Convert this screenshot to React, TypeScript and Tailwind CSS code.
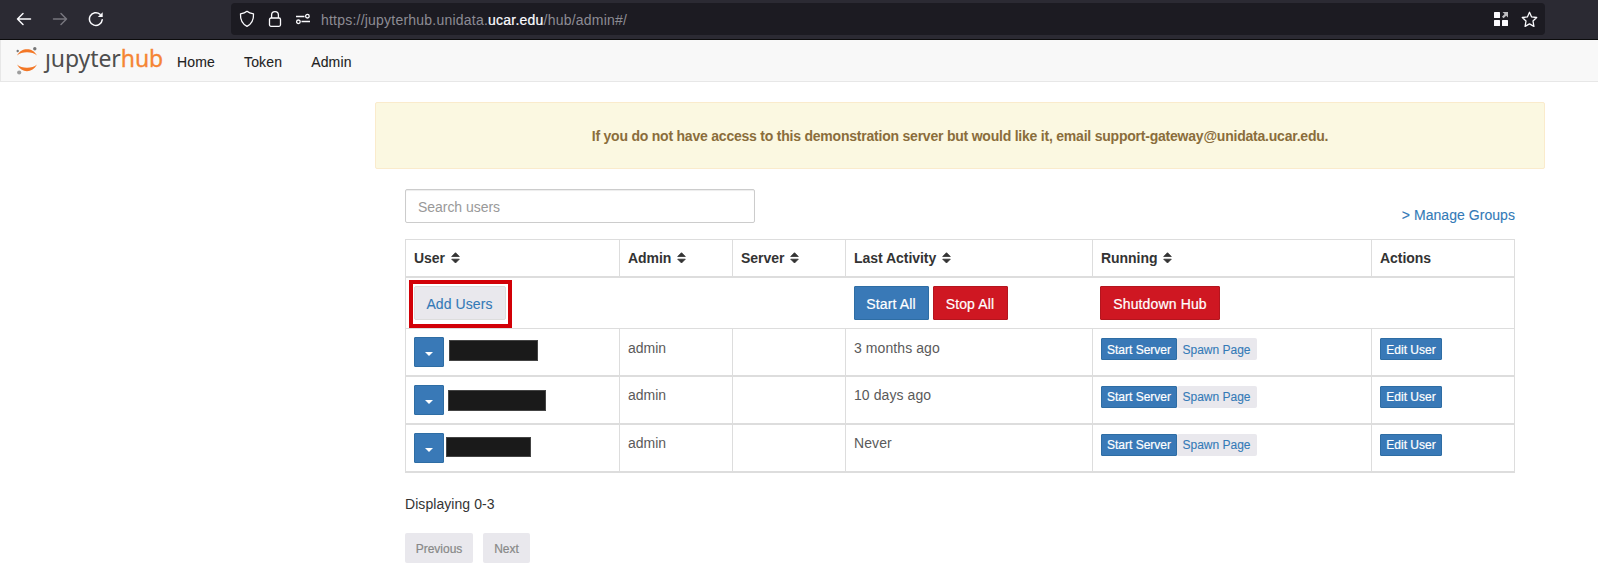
import React from "react";

const users = [
  { activity: "3 months ago", mask: "ml-[5px] mt-[3px] h-[21px] w-[89px]", shift: "pt-px" },
  { activity: "10 days ago", mask: "ml-[4px] mt-[5px] h-[21px] w-[98px]", shift: "" },
  { activity: "Never", mask: "ml-[2px] mt-[4px] h-[20px] w-[85px]", shift: "" },
];

const Sort = () => (
  <svg width="9" height="12" viewBox="0 0 9 12" className="ml-[6px] inline-block align-[-1px]" fill="#333" stroke="#333" strokeWidth="0.8" strokeLinejoin="round">
    <path d="M4.5 0.7 8.3 4.5H0.7Z M0.7 7.2H8.3L4.5 11Z" />
  </svg>
);

function BrowserBar() {
  return (
    <div className="flex h-10 items-start border-b border-[#0c0c0d] bg-[#2b2a33] text-[#fbfbfe]">
      <div className="flex h-[38px] w-[231px] items-center pl-[16px]">
        <svg width="16" height="14" viewBox="0 0 16 14" fill="none" stroke="#fbfbfe" strokeWidth="1.5" strokeLinecap="round" strokeLinejoin="round">
          <path d="M14.5 7H1.5M7 1.5 1.5 7 7 12.5" />
        </svg>
        <svg width="16" height="14" viewBox="0 0 16 14" className="ml-[20px]" fill="none" stroke="#77767e" strokeWidth="1.5" strokeLinecap="round" strokeLinejoin="round">
          <path d="M1.5 7h13M9 1.5 14.5 7 9 12.5" />
        </svg>
        <svg width="16" height="16" viewBox="0 0 16 16" className="ml-[20px]" fill="none" stroke="#fbfbfe" strokeWidth="1.5" strokeLinecap="round">
          <path d="M14.2 8.800A6.400 6.400 0 1 1 12 3.200" />
          <path d="M14.700 1.200v4.900H9.800Z" fill="#fbfbfe" stroke="none" />
        </svg>
      </div>
      <div className="mt-[3px] flex h-8 w-[1314px] items-center rounded-[4px] bg-[#1c1b22] pl-[8px] pr-[7px]">
        <svg width="16" height="18" viewBox="0 0 16 18" fill="none" stroke="#fbfbfe" strokeWidth="1.300" strokeLinejoin="round">
          <path d="M8 1.300C6.200 2.800 4 3.500 1.500 3.900 1.200 9.600 3 13.800 8 16.400 13 13.800 14.800 9.600 14.500 3.900 12 3.500 9.800 2.800 8 1.300Z" />
        </svg>
        <svg width="14" height="18" viewBox="0 0 14 18" className="ml-[13px]" fill="none" stroke="#fbfbfe" strokeWidth="1.300">
          <rect x="1.500" y="8" width="11" height="8.300" rx="1.500" />
          <path d="M3.600 8V5a3.400 3.400 0 0 1 6.800 0v3" />
        </svg>
        <svg width="16" height="12" viewBox="0 0 16 12" className="ml-[13px]" fill="none" stroke="#fbfbfe" strokeWidth="1.300">
          <path d="M1 3.500h8.500M6.500 8.500H15" />
          <circle cx="12.400" cy="3.200" r="1.800" />
          <circle cx="3.400" cy="8.800" r="1.800" />
        </svg>
        <div className="ml-[10px] flex-1 whitespace-nowrap pt-[2px] text-[14px] leading-5 tracking-[0.22px] text-[#8d8c94]">
          https://jupyterhub.unidata.<span className="text-[#fbfbfe] [-webkit-text-stroke:0.2px]">ucar.edu</span>/hub/admin#/
        </div>
        <svg width="14" height="14" viewBox="0 0 14 14" fill="#fbfbfe">
          <rect width="6" height="6" rx=".5" />
          <rect y="8" width="6" height="6" rx=".5" />
          <rect x="8" y="8" width="6" height="6" rx=".5" />
          <path d="M8.500 0H14v5.500L12.200 3.800 9.500 6.200 8 4.700l2.600-2.600Z" fill="#bdbdc0" />
        </svg>
        <svg width="17" height="17" viewBox="0 0 17 17" className="ml-[13px]" fill="none" stroke="#fbfbfe" strokeWidth="1.300" strokeLinejoin="round">
          <path d="M8.500 1.300 10.600 5.900 15.700 6.500 12 10 12.900 15.400 8.500 12.900 4.100 15.400 5 10 1.300 6.500 6.400 5.900Z" />
        </svg>
      </div>
    </div>
  );
}

function NavBar() {
  return (
    <nav className="flex h-[42px] border-b border-l border-[#e7e7e7] bg-[#f8f8f8] text-[14px] text-[#222]">
      <svg width="22" height="30" viewBox="0 0 22 30" className="ml-[15px] mt-[6px]">
        <path d="M1 9.500C3.500 5 7 3.200 11 3.200s7.500 1.800 10 6.300C18.500 7.300 15 6.300 11 6.300S3.500 7.300 1 9.500Z" fill="#f37726" />
        <path d="M1 18.500C3.500 23 7 25.200 11 25.200s7.500-2.200 10-6.700C18.500 20.700 15 21.700 11 21.700S3.500 20.700 1 18.500Z" fill="#f37726" />
        <circle cx="18.800" cy="2.700" r="1.700" fill="#767677" />
        <circle cx="1.700" cy="5" r="1.200" fill="#767677" />
        <circle cx="3.200" cy="26.500" r="2.100" fill="#9e9e9e" />
      </svg>
      <div className="ml-[7px] mt-[2px] h-[32px] w-[119px] whitespace-nowrap font-['Noto_Sans',sans-serif] text-[23px] leading-8 tracking-[-0.08px] text-[#4e4e4e]">
        <span className="inline-block [clip-path:inset(11px_-4px_-4px_-4px)]">j</span>upyter<span className="text-[#f58534] [-webkit-text-stroke:0.3px]">hub</span>
      </div>
      <div className="flex gap-[29px] pl-[13px] pt-[12px] leading-5 tracking-[0.16px] [-webkit-text-stroke:0.1px]">
        <span>Home</span>
        <span>Token</span>
        <span>Admin</span>
      </div>
    </nav>
  );
}

const th = "border-l border-t border-b-2 border-[#ddd] pl-2 text-left font-bold tracking-[-0.04px] last:border-r";
const td = "border-l border-b-2 border-[#ddd] p-0 pl-2 align-top last:border-r";
const blue = "border border-[#2e6da4] bg-[#3979b7] text-white [-webkit-text-stroke:0.2px]";
const red = "border border-[#b4151e] bg-[#cf1722] text-white [-webkit-text-stroke:0.2px]";

export default function App() {
  return (
    <div className="h-[574px] w-[1598px] overflow-hidden bg-white font-['Liberation_Sans',Arial,sans-serif] text-[14px] leading-5 text-[#333]">
      <BrowserBar />
      <NavBar />
      <div className="ml-[375px] mt-[20px] flex h-[67px] w-[1170px] items-center justify-center rounded-[2px] border border-[#faebcc] bg-[#fbf8e1] pt-px font-bold tracking-[-0.219px] text-[#8a6d3b]">
        <span className="whitespace-nowrap">If you do not have access to this demonstration server but would like it, email support-gateway@unidata.ucar.edu.</span>
      </div>
      <main className="ml-[405px] mt-[20px] w-[1110px]">
        <div className="flex h-[50px] justify-between">
          <input placeholder="Search users" className="h-[34px] w-[350px] rounded-[2px] border border-[#ccc] px-3 pt-[2px] tracking-[-0.04px] shadow-[inset_0_1px_1px_rgba(0,0,0,0.075)] placeholder:text-[#999]" />
          <span className="mt-[16px] tracking-[0.05px] text-[#337ab7] [-webkit-text-stroke:0.1px]">&gt; Manage Groups</span>
        </div>
        <table className="w-full table-fixed border-separate border-spacing-0">
          <colgroup>
            <col className="w-[214px]" />
            <col className="w-[113px]" />
            <col className="w-[113px]" />
            <col className="w-[247px]" />
            <col className="w-[279px]" />
            <col className="w-[144px]" />
          </colgroup>
          <thead>
            <tr className="h-[39px]">
              <th className={th}>User<Sort /></th>
              <th className={th}>Admin<Sort /></th>
              <th className={th}>Server<Sort /></th>
              <th className={th}>Last Activity<Sort /></th>
              <th className={th}>Running<Sort /></th>
              <th className={th}>Actions</th>
            </tr>
          </thead>
          <tbody>
            <tr className="h-[51px]">
              <td className="border-b border-l border-[#ddd] p-0 pl-2 pt-2 align-top">
                <div className="relative w-[92px]">
                  <button className="block h-[34px] w-[92px] rounded-[2px] border border-[#ddd] bg-[#e9e8ed] pr-px pt-[2px] tracking-[0.08px] text-[#337ab7] [-webkit-text-stroke:0.1px]">Add Users</button>
                  <div className="absolute -left-[5px] -top-[6px] h-[48px] w-[103px] border-4 border-[#d20007]" />
                </div>
              </td>
              <td className="border-b border-[#ddd]" />
              <td className="border-b border-[#ddd]" />
              <td className="border-b border-[#ddd] p-0 pl-[9px] pt-2 align-top">
                <div className="flex gap-1">
                  <button className={"h-[34px] w-[75px] rounded-[1px] pr-px pt-[2px] tracking-[0.14px] " + blue}>Start All</button>
                  <button className={"h-[34px] w-[75px] rounded-[1px] pr-px pt-[2px] tracking-[0.14px] " + red}>Stop All</button>
                </div>
              </td>
              <td className="border-b border-[#ddd] p-0 pl-2 pt-2 align-top">
                <button className={"block h-[34px] w-[120px] rounded-[1px] pt-[2px] tracking-[0.14px] " + red}>Shutdown Hub</button>
              </td>
              <td className="border-b border-r border-[#ddd]" />
            </tr>
            {users.map((u) => (
              <tr key={u.activity} className="h-[48px] text-[#5a5a5a]">
                <td className={td}>
                  <div className="flex items-start pt-2">
                    <button className={"flex h-[30px] w-[30px] items-center justify-center rounded-[1px] pt-[4px] " + blue}>
                      <svg width="8" height="4" viewBox="0 0 8 4" fill="#fff"><path d="M0 0h8L4 4Z" /></svg>
                    </button>
                    <div className={"border border-[#444] bg-[#1a1a1a] " + u.mask} />
                  </div>
                </td>
                <td className={td}><div className={"mt-[8px] " + u.shift}>admin</div></td>
                <td className={td} />
                <td className={td}><div className={"mt-[8px] tracking-[0.08px] " + u.shift}>{u.activity}</div></td>
                <td className={td}>
                  <div className="flex pt-[9px] text-[12px] leading-[18px]">
                    <button className={"h-[22px] w-[76px] whitespace-nowrap rounded-[1px] " + blue + " " + u.shift}>Start Server</button>
                    <button className={"h-[22px] w-[80px] whitespace-nowrap rounded-[2px] bg-[#e9e8ed] pr-px text-[#337ab7] [-webkit-text-stroke:0.1px] " + u.shift}>Spawn Page</button>
                  </div>
                </td>
                <td className={td}>
                  <div className="flex pt-[9px] text-[12px] leading-[18px]">
                    <button className={"h-[22px] w-[62px] whitespace-nowrap rounded-[1px] " + blue + " " + u.shift}>Edit User</button>
                  </div>
                </td>
              </tr>
            ))}
          </tbody>
        </table>
        <p className="mt-[21px] tracking-[0.06px]">Displaying 0-3</p>
        <div className="mt-[19px] flex gap-[10px] text-[12px] text-[#888] [-webkit-text-stroke:0.2px]">
          <button className="h-[30px] w-[68px] rounded-[2px] bg-[#e9e8ed] pt-[2px]">Previous</button>
          <button className="h-[30px] w-[47px] rounded-[2px] bg-[#e9e8ed] pt-[2px]">Next</button>
        </div>
      </main>
    </div>
  );
}
